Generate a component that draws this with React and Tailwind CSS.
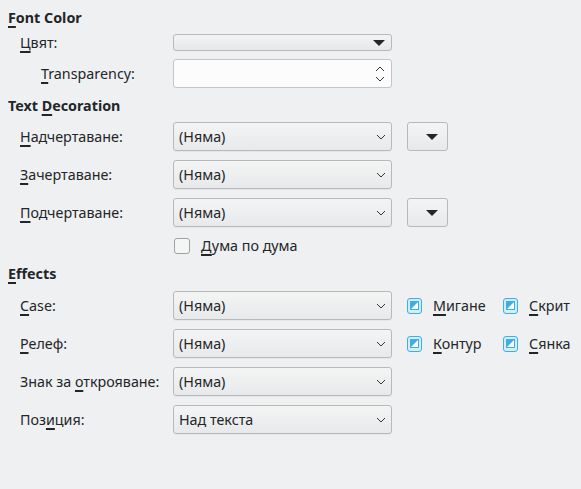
const Chevron = () => (
  <svg width="10" height="6" viewBox="0 0 10 6" className="shrink-0">
    <polyline points="1,1 5,5 9,1" fill="none" stroke="#31363b" strokeWidth="1" />
  </svg>
);

const Triangle = () => (
  <svg width="12" height="6" viewBox="0 0 12 6" className="shrink-0">
    <polygon points="0,0 12,0 6,6" fill="#232629" />
  </svg>
);

function Select({ value }) {
  return (
    <div className="w-[219px] h-[29px] rounded-[3px] border border-[#b7b9bb] bg-gradient-to-b from-[#f3f4f4] to-[#e8e9ea] flex items-center justify-between pl-[5px] pr-[5px] shadow-[0_1px_0_rgba(0,0,0,0.04)]">
      <span>{value}</span>
      <Chevron />
    </div>
  );
}

function ColorButton() {
  return (
    <div className="w-[41px] h-[29px] rounded-[3px] border border-[#b7b9bb] bg-gradient-to-b from-[#f3f4f4] to-[#e8e9ea] flex items-center justify-end pr-[9px]">
      <Triangle />
    </div>
  );
}

function Mn({ children }) {
  return <span className="underline decoration-[1.5px] underline-offset-[3px]">{children}</span>;
}

function Label({ children, indent = 'pl-[12px]' }) {
  return <div className={`w-[165px] ${indent} shrink-0`}>{children}</div>;
}

function Heading({ children, className = '' }) {
  return <div className={`h-[18px] leading-[18px] font-bold ${className}`}>{children}</div>;
}

function TriCheck({ label }) {
  return (
    <div className="flex items-center gap-[11px]">
      <div className="w-[15px] h-[16px] rounded-[3px] border border-[#3daee9] bg-[#d5ecf9] flex items-center justify-center">
        <svg width="9" height="9" viewBox="0 0 9 9">
          <rect x="0" y="0" width="9" height="9" fill="#3daee9" />
          <polygon points="8,1 8,8 1,8" fill="#ffffff" />
        </svg>
      </div>
      <span>{label}</span>
    </div>
  );
}

function Row({ label, children, className = 'mt-[9px]' }) {
  return (
    <div className={`flex items-center ${className}`}>
      <Label>{label}</Label>
      {children}
    </div>
  );
}

export default function App() {
  return (
    <div
      className="w-[581px] h-[489px] bg-[#eff0f1] text-[#232629] text-[14.3px] pl-[8px] pt-[9px]"
      style={{ fontFamily: '"Noto Sans", "DejaVu Sans", sans-serif' }}
    >
      <Heading><Mn>F</Mn>ont Color</Heading>

      <div className="flex items-center mt-[7px] h-[17px]">
        <Label><Mn>Ц</Mn>вят:</Label>
        <div className="w-[219px] h-[17px] rounded-[3px] border border-[#b7b9bb] bg-gradient-to-b from-[#f3f4f4] to-[#e6e7e8] flex items-center justify-end pr-[6px]">
          <Triangle />
        </div>
      </div>

      <div className="flex items-center mt-[8px]">
        <Label indent="pl-[33px]"><Mn>T</Mn>ransparency:</Label>
        <div className="w-[219px] h-[29px] rounded-[3px] border border-[#c3c5c6] bg-[#fcfcfc] flex items-center justify-end pr-[6px]">
          <svg width="10" height="16" viewBox="0 0 10 16">
            <polyline points="1,5 5,1 9,5" fill="none" stroke="#31363b" strokeWidth="1" />
            <polyline points="1,11 5,15 9,11" fill="none" stroke="#31363b" strokeWidth="1" />
          </svg>
        </div>
      </div>

      <Heading className="mt-[9px]">Text <Mn>D</Mn>ecoration</Heading>

      <Row label={<><Mn>Н</Mn>адчертаване:</>} className="mt-[7px]">
        <Select value="(Няма)" />
        <div className="ml-[15px]"><ColorButton /></div>
      </Row>
      <Row label={<><Mn>З</Mn>ачертаване:</>}>
        <Select value="(Няма)" />
      </Row>
      <Row label={<><Mn>П</Mn>одчертаване:</>}>
        <Select value="(Няма)" />
        <div className="ml-[15px]"><ColorButton /></div>
      </Row>

      <div className="flex items-center mt-[11px] h-[16px] pl-[166px]">
        <div className="w-[16px] h-[16px] rounded-[3px] border border-[#9fa1a3] bg-[#f4f5f5]" />
        <span className="ml-[11px]"><Mn>Д</Mn>ума по дума</span>
      </div>

      <Heading className="mt-[11px]"><Mn>E</Mn>ffects</Heading>

      <Row label={<><Mn>C</Mn>ase:</>} className="mt-[8px]">
        <Select value="(Няма)" />
        <div className="ml-[15px] w-[96px]"><TriCheck label={<><Mn>М</Mn>игане</>} /></div>
        <TriCheck label={<><Mn>С</Mn>крит</>} />
      </Row>
      <Row label={<><Mn>Р</Mn>елеф:</>}>
        <Select value="(Няма)" />
        <div className="ml-[15px] w-[96px]"><TriCheck label={<><Mn>К</Mn>онтур</>} /></div>
        <TriCheck label={<><Mn>С</Mn>янка</>} />
      </Row>
      <Row label={<>Знак за <Mn>о</Mn>ткрояване:</>}>
        <Select value="(Няма)" />
      </Row>
      <Row label={<>Поз<Mn>и</Mn>ция:</>}>
        <Select value="Над текста" />
      </Row>
    </div>
  );
}
